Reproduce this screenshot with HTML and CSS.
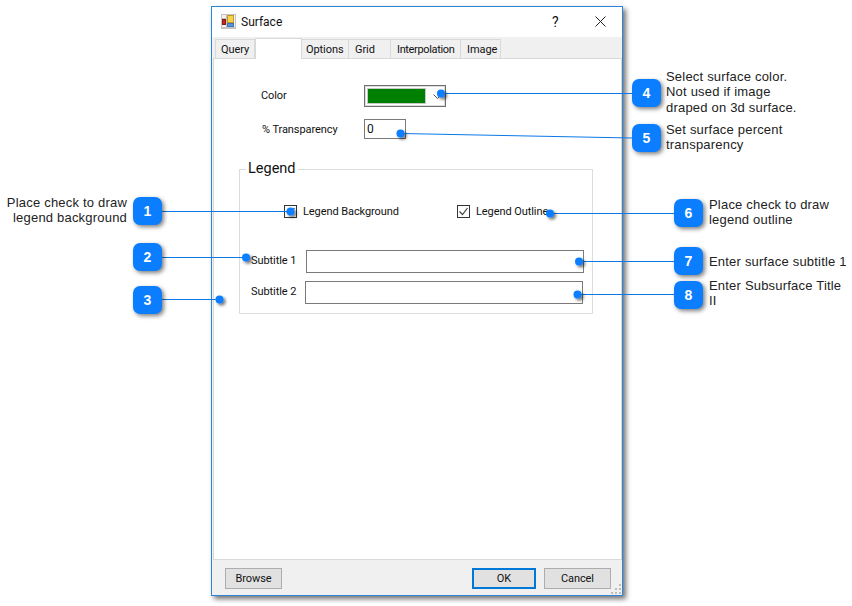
FILE: index.html
```html
<!DOCTYPE html>
<html lang="en">
<head>
<meta charset="utf-8">
<title>Surface</title>
<link rel="stylesheet" href="styles.css">
</head>
<body>
<div class="canvas">
  <section class="dialog">
    <header class="titlebar">
      <svg class="app-icon" width="15" height="15" viewBox="0 0 15 15">
        <rect x="0.500" y="0.500" width="14" height="14" fill="#f2f2f2" stroke="#c4c4c4"/>
        <path d="M0 4.500h5M0 10.500h5M5.500 0v15M0 13.500h15" stroke="#c4c4c4" stroke-width="1"/>
        <rect x="6.500" y="1.500" width="6" height="7" fill="#f8d34a" stroke="#c39a2a"/>
        <rect x="1.500" y="5.500" width="3" height="5" fill="#c2281e" stroke="#8a1a14"/>
        <rect x="6.500" y="9.500" width="6" height="3" fill="#5b93dc" stroke="#3f74bb"/>
      </svg>
      <span class="title">Surface</span>
      <span class="help">?</span>
      <svg class="close" width="11" height="11" viewBox="0 0 11 11"><path d="M0.500 0.500l10 10M10.500 0.500l-10 10" stroke="#222" stroke-width="1" fill="none"/></svg>
    </header>
    <nav class="tabs">
      <span class="tab tab-query">Query</span>
      <span class="tab tab-active"></span>
      <span class="tab tab-options">Options</span>
      <span class="tab tab-grid">Grid</span>
      <span class="tab tab-interp">Interpolation</span>
      <span class="tab tab-image">Image</span>
    </nav>
    <main class="panel">
      <div class="row row-color">
        <label class="lbl lbl-color">Color</label>
        <div class="combo"><span class="swatch"></span>
          <svg class="chev" width="9" height="6" viewBox="0 0 9 6"><path d="M0.500 0.500l4 4 4-4" stroke="#555" fill="none"/></svg>
        </div>
      </div>
      <div class="row row-trans">
        <label class="lbl lbl-trans">% Transparency</label>
        <div class="field field-trans">0</div>
      </div>
      <fieldset class="group">
        <legend class="group-title">Legend</legend>
        <div class="checks">
          <span class="check check-a"><span class="box"><svg width="11" height="11" viewBox="0 0 11 11"><path d="M1.500 5.500l3 3 5-6.500" stroke="#444" stroke-width="1.200" fill="none"/></svg></span>Legend Background</span>
          <span class="check check-b"><span class="box"><svg width="11" height="11" viewBox="0 0 11 11"><path d="M1.500 5.500l3 3 5-6.500" stroke="#444" stroke-width="1.200" fill="none"/></svg></span>Legend Outline</span>
        </div>
        <div class="sub sub-1"><label class="lbl">Subtitle 1</label><div class="field field-sub"></div></div>
        <div class="sub sub-2"><label class="lbl">Subtitle 2</label><div class="field field-sub"></div></div>
      </fieldset>
    </main>
    <footer class="footer">
      <button class="btn btn-browse">Browse</button>
      <span class="spacer"></span>
      <button class="btn btn-ok">OK</button>
      <button class="btn btn-cancel">Cancel</button>
      <svg class="grip" width="11" height="11" viewBox="0 0 11 11"><path d="M8 0h2v2h-2zM4 4h2v2h-2zM8 4h2v2h-2zM0 8h2v2h-2zM4 8h2v2h-2zM8 8h2v2h-2z" fill="#bdbdbd"/></svg>
    </footer>
  </section>

  <svg class="wires" width="852" height="606" viewBox="0 0 852 606">
    <defs><filter id="ds" x="-100%" y="-100%" width="300%" height="300%"><feDropShadow dx="2" dy="2" stdDeviation="1.500" flood-color="#000" flood-opacity=".55"/></filter></defs>
    <g stroke="#0a78e6" stroke-width="1" fill="none">
      <path d="M162 211.500H290"/><path d="M162 257.500H246"/><path d="M162 299.500H220"/>
      <path d="M632 93.500H441"/><path d="M632 138L401 133.500"/>
      <path d="M674 213.500H550"/><path d="M674 261.500H579"/><path d="M674 294.500H578"/>
    </g>
    <g fill="#0a7eff" filter="url(#ds)">
      <circle cx="290.500" cy="211.500" r="4"/><circle cx="246" cy="257.500" r="4"/><circle cx="219.500" cy="299.500" r="4"/>
      <circle cx="441" cy="93.500" r="4"/><circle cx="400.500" cy="133.500" r="4"/>
      <circle cx="550" cy="213.500" r="4"/><circle cx="579" cy="261.500" r="4"/><circle cx="577.500" cy="294.500" r="4"/>
    </g>
  </svg>

  <div class="badge b1">1</div><div class="badge b2">2</div><div class="badge b3">3</div><div class="badge b4">4</div>
  <div class="badge b5">5</div><div class="badge b6">6</div><div class="badge b7">7</div><div class="badge b8">8</div>

  <p class="note n1">Place check to draw<br>legend background</p>
  <p class="note n4">Select surface color.<br>Not used if image<br>draped on 3d surface.</p>
  <p class="note n5">Set surface percent<br>transparency</p>
  <p class="note n6">Place check to draw<br>legend outline</p>
  <p class="note n7">Enter surface subtitle 1</p>
  <p class="note n8">Enter Subsurface Title<br>II</p>
</div>
</body>
</html>
```
FILE: styles.css
```css
* { box-sizing: border-box; }
html, body { margin: 0; padding: 0; background: #fff; }
.canvas {
  position: relative;
  width: 852px;
  height: 606px;
  overflow: hidden;
  font-family: Roboto, "Liberation Sans", sans-serif;
  font-size: 12px;
  color: #111;
}
.dialog {
  position: absolute;
  left: 211px;
  top: 6px;
  width: 412px;
  height: 590px;
  display: flex;
  flex-direction: column;
  background: #f0f0f0;
  border: 1px solid #2b85d8;
  box-shadow: 3px 3px 5px rgba(0, 0, 0, .55);
}
.titlebar {
  height: 30px;
  flex: none;
  display: flex;
  align-items: center;
  background: #fff;
  padding-left: 9px;
  padding-bottom: 1px;
}
.app-icon { flex: none; }
.title { margin-left: 5px; font-size: 12px; }
.help { margin-left: 268px; font-size: 14px; width: 10px; text-align: center; }
.close { margin-left: 35px; }

.tabs {
  height: 21px;
  flex: none;
  display: flex;
  align-items: flex-end;
  padding-left: 3px;
  position: relative;
  z-index: 1;
}
.tab {
  height: 19px;
  display: flex;
  align-items: center;
  padding-left: 6px;
  background: #f0f0f0;
  border: 1px solid #d9d9d9;
  border-bottom: 0;
  border-left-width: 0;
  font-size: 11px;
  letter-spacing: -.08px;
}
.tab-query { width: 40px; border-left-width: 1px; padding-left: 5px; }
.tab-active { width: 47px; height: 21px; margin-bottom: -1px; background: #fff; border-left-width: 1px; }
.tab-options { width: 47px; padding-left: 4px; }
.tab-grid { width: 42px; }
.tab-interp { width: 70px; letter-spacing: -.35px; }
.tab-image { width: 40px; }

.panel {
  flex: 1;
  margin: 0 0 0 1px;
  width: 409px;
  background: #fff;
  border: 1px solid #d9d9d9;
  padding-left: 25px;
  padding-top: 26px;
}
.row { display: flex; align-items: center; }
.lbl { font-size: 11px; letter-spacing: -.08px; white-space: nowrap; }
.row-color { height: 22px; padding-left: 22px; }
.lbl-color { width: 103px; position: relative; top: -1px; }
.combo {
  width: 82px;
  height: 22px;
  border: 1px solid #6f6f6f;
  box-shadow: inset 0 0 0 1px #dcdcdc;
  padding: 3px;
  display: flex;
  align-items: center;
  background: #fff;
}
.swatch { width: 57px; height: 14px; background: #008000; outline: 1px solid #c8c8c8; margin-left: 0; }
.chev { margin-left: 8px; margin-top: 2px; }
.row-trans { margin-top: 12px; height: 20px; padding-left: 23px; }
.lbl-trans { width: 102px; }
.field {
  border: 1px solid #7a7a7a;
  background: #fff;
  font-size: 12px;
}
.field-trans { width: 42px; height: 20px; padding-left: 2px; line-height: 18px; }

.group {
  margin: 21px 0 0;
  padding: 0;
  width: 354px;
  height: 154px;
  border: 1px solid #dcdcdc;
  display: block;
  min-width: 0;
}
.group-title { margin-left: 6px; padding: 0 2px; font-size: 14.500px; line-height: 18px; height: 18px; }
.checks { position: relative; display: flex; height: 20px; margin-top: 23px; padding-left: 44px; }
.check { display: flex; align-items: center; font-size: 11px; letter-spacing: -.08px; white-space: nowrap; }
.check-a { width: 173px; }
.box {
  width: 13px;
  height: 13px;
  margin-right: 6px;
  border: 1px solid #333;
  background: #fff;
  display: flex;
  align-items: center;
  justify-content: center;
}
.sub { display: flex; align-items: center; }
.sub .lbl { width: 66px; padding-left: 11px; padding-bottom: 2px; }
.sub-1 { margin-top: 29px; }
.sub-2 { margin-top: 8px; }
.field-sub { height: 23px; width: 278px; }
.sub-2 .lbl { width: 65px; }

.footer {
  height: 35px;
  flex: none;
  display: flex;
  align-items: flex-start;
  padding: 8px 0 0 13px;
  position: relative;
}
.spacer { flex: 1; }
.btn {
  height: 21px;
  padding: 0;
  background: #e1e1e1;
  border: 1px solid #adadad;
  font: 11px Roboto, "Liberation Sans", sans-serif;
  letter-spacing: -.1px;
  color: #111;
}
.btn-browse { width: 57px; }
.btn-ok { width: 64px; border: 2px solid #0078d7; }
.btn-cancel { width: 67px; margin-left: 8px; margin-right: 11px; }
.grip { position: absolute; right: 0; bottom: 0; }

.wires { position: absolute; left: 0; top: 0; }
.badge {
  position: absolute;
  width: 29px;
  height: 28px;
  border-radius: 7px;
  background: #0a7eff;
  color: #fff;
  font: bold 14px/28px "Liberation Sans", sans-serif;
  text-align: center;
  box-shadow: 2px 2px 4px rgba(0, 0, 0, .5);
}
.b1 { left: 133px; top: 197px; }
.b2 { left: 133px; top: 243px; }
.b3 { left: 133px; top: 286px; }
.b4 { left: 632px; top: 79px; }
.b5 { left: 632px; top: 124px; }
.b6 { left: 674px; top: 199px; }
.b7 { left: 674px; top: 247px; }
.b8 { left: 674px; top: 281px; }

.note {
  position: absolute;
  margin: 0;
  font: 13px/15.250px "Liberation Sans", sans-serif;
  letter-spacing: .2px;
  color: #222;
  white-space: nowrap;
}
.n1 { right: 725px; top: 195px; text-align: right; }
.n4 { left: 666px; top: 69px; }
.n5 { left: 666px; top: 122px; }
.n6 { left: 709px; top: 197px; }
.n7 { left: 709px; top: 254px; }
.n8 { left: 709px; top: 278px; }
```
